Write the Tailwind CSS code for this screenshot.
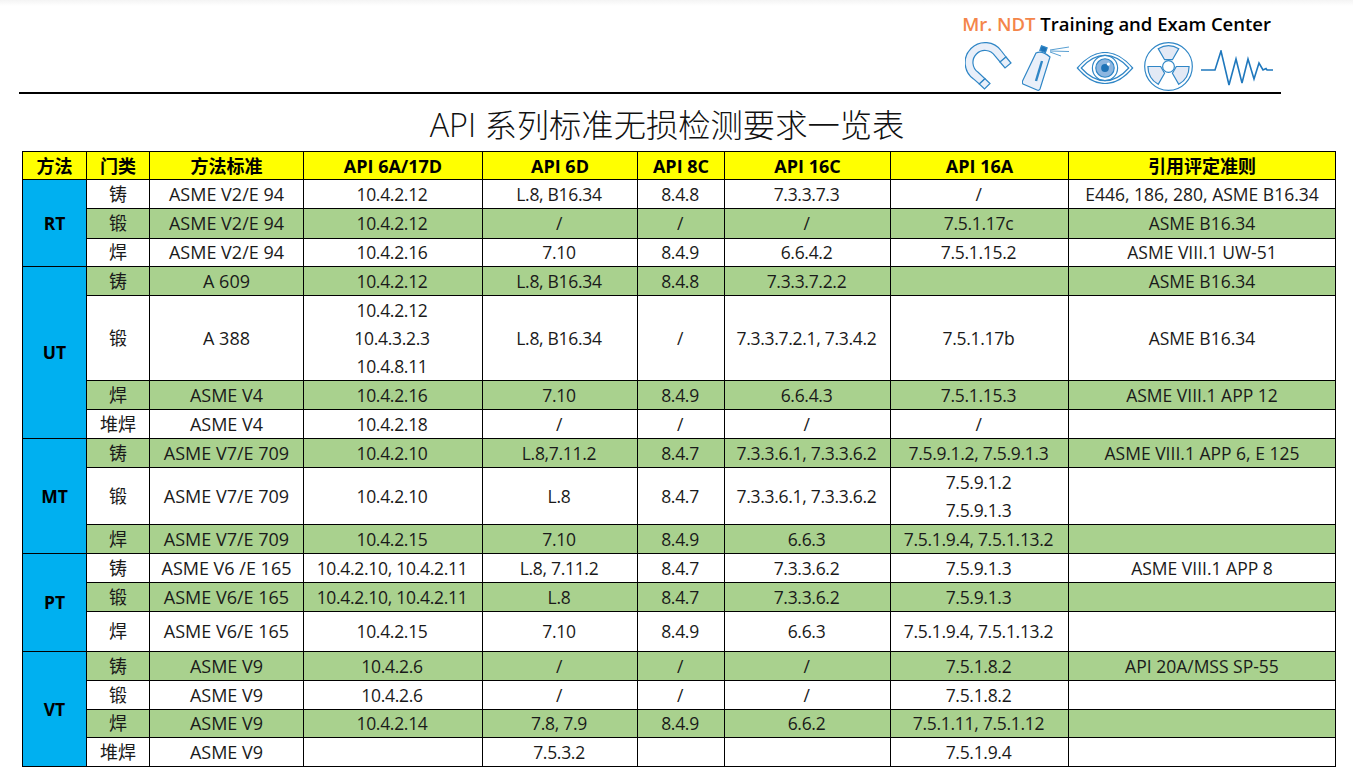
<!DOCTYPE html>
<html lang="zh-CN">
<head>
    <meta charset="UTF-8">
    <title>API 系列标准无损检测要求一览表</title>
    <script src="https://cdn.jsdelivr.net/npm/@tailwindcss/browser@4"></script>
</head>
<body class="bg-white text-[#1a1a1a] font-['Open_Sans','Noto_Sans_CJK_SC',sans-serif] overflow-hidden h-[769px]">
    <div class="h-[6px] bg-gradient-to-b from-[#f4f4f4] to-white"></div>

    <header class="ml-[19px] w-[1262px] h-[88px] border-b-2 border-black flex flex-col items-end pr-[6px]">
        <p class="mt-[7px] text-[18.5px] leading-[22px] font-semibold whitespace-nowrap text-black mr-[4px]"><span class="text-[#f4854a]">Mr. NDT</span> Training and Exam Center</p>
        <div class="flex items-start mt-[7px] w-[310px] h-[48px]">
            <!-- magnet -->
            <svg class="shrink-0" width="48" height="48" viewBox="0 0 48 48" fill="#e9eff9" stroke="#2f86c6" stroke-width="1.2">
                <path d="M41 15L36.4 9A20 20 0 1 0 8.500 36.900L14.300 42L20 36.700L13.100 30.300A12 12 0 1 1 29.800 13.600L35 20Z"/>
                <path d="M41 15L46 21L40 26L35 20Z"/>
                <path d="M20 36.700L25 41.500L19.500 47L14.300 42Z"/>
            </svg>
            <!-- spray can -->
            <svg class="ml-[9px] mt-[3px] shrink-0" width="48" height="46" viewBox="0 0 48 46" fill="#e9eff9" stroke="#2f86c6" stroke-width="1.2">
                <path d="M14 8Q20 5 28 12L18 44Q17 46 15 45L1 39Q0 38 0.5 36Z"/>
                <path d="M20 16L14 36" stroke-width="2.4" fill="none"/>
                <rect x="18.5" y="1.5" width="6" height="5" transform="rotate(20 21 4)" fill="#1f73b7"/>
                <path d="M28 5L47 2M28 6L47 6.500M28 7L39 11" stroke-width="0.8" fill="none"/>
            </svg>
            <!-- eye -->
            <svg class="ml-[6px] mt-[10px] shrink-0" width="58" height="32" viewBox="0 0 58 33" fill="none" stroke="#2f86c6" stroke-width="1.2">
                <path d="M0.5 16.500Q14 0.500 29 0.500T57.500 16.500Q44 32.500 29 32.500T0.500 16.500Z"/>
                <path d="M4.500 16.500Q16 3.500 29 3.500T53.500 16.500Q42 29.500 29 29.500T4.500 16.500Z"/>
                <circle cx="29" cy="16.5" r="13"/>
                <circle cx="29" cy="16.5" r="9.5" fill="#8db6e0"/>
                <circle cx="29" cy="16.5" r="4" fill="#1f73b7" stroke="none"/>
                <circle cx="32.5" cy="12.5" r="1.6" fill="#fff" stroke="none"/>
            </svg>
            <!-- radiation -->
            <svg class="ml-[10px] shrink-0" width="49" height="49" viewBox="0 0 50 50" fill="none" stroke="#2f86c6" stroke-width="1.2">
                <circle cx="25" cy="25" r="24.3"/>
                <circle cx="25" cy="25" r="6"/>
                <path d="M21 18.070L29 18.070L35.500 6.800A21 21 0 0 0 14.500 6.800Z" fill="#e3e9f5"/>
                <path d="M33 25L29 31.930L35.500 43.200A21 21 0 0 0 46 25Z" fill="#e3e9f5"/>
                <path d="M21 31.930L17 25L4 25A21 21 0 0 0 14.500 43.200Z" fill="#e3e9f5"/>
            </svg>
            <!-- signal -->
            <svg class="ml-[8px] mt-[8px] shrink-0" width="72" height="36" viewBox="0 0 72 36" fill="none" stroke="#1f78bd" stroke-width="1.6">
                <path d="M0 20H14L20 1L28 35L35 9L41 33L47 9L53 29L58 13L62 20L65 18.500L66 20H72"/>
            </svg>
        </div>
    </header>

    <h1 class="w-[1334px] mt-[10px] text-center text-[32.3px] leading-[40px] font-light text-[#111]">API 系列标准无损检测要求一览表</h1>

    <table class="ml-[22px] mt-[7px] w-[1314px] table-fixed border-collapse text-center text-[17.5px] [&_td]:border [&_td]:border-black [&_th]:border [&_th]:border-black [&_td]:p-0 [&_th]:p-0 [&_td]:leading-[27px] [&_th]:leading-[24px] [&_td:nth-last-child(8)]:text-[18px] [&_td:nth-last-child(7)]:text-[18px] [&_td:nth-last-child(n+2):nth-last-child(-n+6)]:tracking-[-0.3px] [&_td:nth-last-child(n+2):nth-last-child(-n+6)]:pr-[2px]">
        <colgroup>
            <col class="w-[64px]"><col class="w-[63px]"><col class="w-[154px]"><col class="w-[179px]"><col class="w-[155px]"><col class="w-[87px]"><col class="w-[166px]"><col class="w-[178px]"><col class="w-[267px]">
        </colgroup>
        <thead>
            <tr class="h-[28px] bg-[#ffff00] text-black text-[18px] [&_th]:font-bold">
                <th>方法</th><th>门类</th><th>方法标准</th><th>API 6A/17D</th><th>API 6D</th><th>API 8C</th><th>API 16C</th><th>API 16A</th><th>引用评定准则</th>
            </tr>
        </thead>
        <tbody>
            <tr class="h-[29px]"><td rowspan="3" class="bg-[#00b0f0] font-bold text-black">RT</td><td>铸</td><td>ASME V2/E 94</td><td>10.4.2.12</td><td>L.8, B16.34</td><td>8.4.8</td><td>7.3.3.7.3</td><td>/</td><td>E446, 186, 280, ASME B16.34</td></tr>
            <tr class="h-[30px] bg-[#a9d18e]"><td>锻</td><td>ASME V2/E 94</td><td>10.4.2.12</td><td>/</td><td>/</td><td>/</td><td>7.5.1.17c</td><td>ASME B16.34</td></tr>
            <tr class="h-[28px]"><td>焊</td><td>ASME V2/E 94</td><td>10.4.2.16</td><td>7.10</td><td>8.4.9</td><td>6.6.4.2</td><td>7.5.1.15.2</td><td>ASME VIII.1 UW-51</td></tr>

            <tr class="h-[29px] bg-[#a9d18e]"><td rowspan="4" class="bg-[#00b0f0] font-bold text-black">UT</td><td>铸</td><td>A 609</td><td>10.4.2.12</td><td>L.8, B16.34</td><td>8.4.8</td><td>7.3.3.7.2.2</td><td></td><td>ASME B16.34</td></tr>
            <tr class="h-[85px]"><td>锻</td><td>A 388</td><td class="leading-[28px]!">10.4.2.12<br>10.4.3.2.3<br>10.4.8.11</td><td>L.8, B16.34</td><td>/</td><td>7.3.3.7.2.1, 7.3.4.2</td><td>7.5.1.17b</td><td>ASME B16.34</td></tr>
            <tr class="h-[29px] bg-[#a9d18e]"><td>焊</td><td>ASME V4</td><td>10.4.2.16</td><td>7.10</td><td>8.4.9</td><td>6.6.4.3</td><td>7.5.1.15.3</td><td>ASME VIII.1 APP 12</td></tr>
            <tr class="h-[29px]"><td>堆焊</td><td>ASME V4</td><td>10.4.2.18</td><td>/</td><td>/</td><td>/</td><td>/</td><td></td></tr>

            <tr class="h-[29px] bg-[#a9d18e]"><td rowspan="3" class="bg-[#00b0f0] font-bold text-black">MT</td><td>铸</td><td>ASME V7/E 709</td><td>10.4.2.10</td><td>L.8,7.11.2</td><td>8.4.7</td><td>7.3.3.6.1, 7.3.3.6.2</td><td>7.5.9.1.2, 7.5.9.1.3</td><td>ASME VIII.1 APP 6, E 125</td></tr>
            <tr class="h-[57px]"><td>锻</td><td>ASME V7/E 709</td><td>10.4.2.10</td><td>L.8</td><td>8.4.7</td><td>7.3.3.6.1, 7.3.3.6.2</td><td class="leading-[28px]!">7.5.9.1.2<br>7.5.9.1.3</td><td></td></tr>
            <tr class="h-[29px] bg-[#a9d18e]"><td>焊</td><td>ASME V7/E 709</td><td>10.4.2.15</td><td>7.10</td><td>8.4.9</td><td>6.6.3</td><td>7.5.1.9.4, 7.5.1.13.2</td><td></td></tr>

            <tr class="h-[29px]"><td rowspan="3" class="bg-[#00b0f0] font-bold text-black">PT</td><td>铸</td><td>ASME V6 /E 165</td><td>10.4.2.10, 10.4.2.11</td><td>L.8, 7.11.2</td><td>8.4.7</td><td>7.3.3.6.2</td><td>7.5.9.1.3</td><td>ASME VIII.1 APP 8</td></tr>
            <tr class="h-[29px] bg-[#a9d18e]"><td>锻</td><td>ASME V6/E 165</td><td>10.4.2.10, 10.4.2.11</td><td>L.8</td><td>8.4.7</td><td>7.3.3.6.2</td><td>7.5.9.1.3</td><td></td></tr>
            <tr class="h-[40px]"><td>焊</td><td>ASME V6/E 165</td><td>10.4.2.15</td><td>7.10</td><td>8.4.9</td><td>6.6.3</td><td>7.5.1.9.4, 7.5.1.13.2</td><td></td></tr>

            <tr class="h-[29px] bg-[#a9d18e]"><td rowspan="4" class="bg-[#00b0f0] font-bold text-black">VT</td><td>铸</td><td>ASME V9</td><td>10.4.2.6</td><td>/</td><td>/</td><td>/</td><td>7.5.1.8.2</td><td>API 20A/MSS SP-55</td></tr>
            <tr class="h-[29px]"><td>锻</td><td>ASME V9</td><td>10.4.2.6</td><td>/</td><td>/</td><td>/</td><td>7.5.1.8.2</td><td></td></tr>
            <tr class="h-[28px] bg-[#a9d18e]"><td>焊</td><td>ASME V9</td><td>10.4.2.14</td><td>7.8, 7.9</td><td>8.4.9</td><td>6.6.2</td><td>7.5.1.11, 7.5.1.12</td><td></td></tr>
            <tr class="h-[29px]"><td>堆焊</td><td>ASME V9</td><td></td><td>7.5.3.2</td><td></td><td></td><td>7.5.1.9.4</td><td></td></tr>
        </tbody>
    </table>
</body>
</html>
